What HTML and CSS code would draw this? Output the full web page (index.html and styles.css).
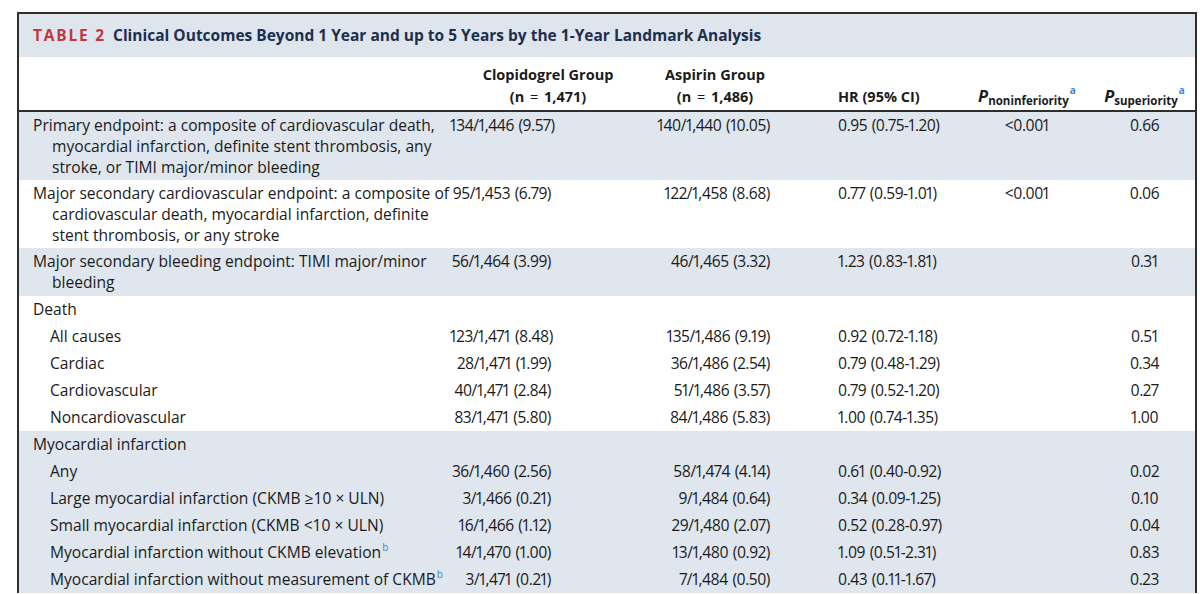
FILE: index.html
```html
<!DOCTYPE html>
<html lang="en">
<head>
<meta charset="utf-8">
<title>Table 2</title>
<link rel="stylesheet" href="styles.css">
</head>
<body>
<div class="frame">
  <div class="caption"><span class="label">TABLE 2</span><span class="title">Clinical Outcomes Beyond 1 Year and up to 5 Years by the 1-Year Landmark Analysis</span></div>
  <table class="outcomes">
    <colgroup>
      <col class="c-label"><col class="c-clop"><col class="c-asp"><col class="c-hr"><col class="c-pn"><col class="c-ps">
    </colgroup>
    <thead>
      <tr>
        <th class="h-label"></th>
        <th class="h-clop">Clopidogrel Group<br>(n <span class="eq">=</span> 1,471)</th>
        <th class="h-asp">Aspirin Group<br>(n <span class="eq">=</span> 1,486)</th>
        <th class="h-hr">HR (95% CI)</th>
        <th class="h-p"><i class="p">P</i><sub>noninferiority</sub><sup class="fn">a</sup></th>
        <th class="h-p"><i class="p">P</i><sub>superiority</sub><sup class="fn">a</sup></th>
      </tr>
    </thead>
    <tbody class="band">
      <tr class="multi">
        <td class="lbl">Primary endpoint: a composite of cardiovascular death, myocardial infarction, definite stent thrombosis, any stroke, or TIMI major/minor bleeding</td>
        <td class="clop">134/1,446 (9.57)</td><td class="asp">140/1,440 (10.05)</td><td class="hr">0.95 (0.75-1.20)</td><td class="pn">&lt;0.001</td><td class="ps">0.66</td>
      </tr>
    </tbody>
    <tbody>
      <tr class="multi">
        <td class="lbl">Major secondary cardiovascular endpoint: a composite of cardiovascular death, myocardial infarction, definite stent thrombosis, or any stroke</td>
        <td class="clop">95/1,453 (6.79)</td><td class="asp">122/1,458 (8.68)</td><td class="hr">0.77 (0.59-1.01)</td><td class="pn">&lt;0.001</td><td class="ps">0.06</td>
      </tr>
    </tbody>
    <tbody class="band">
      <tr class="multi last">
        <td class="lbl">Major secondary bleeding endpoint: TIMI major/minor bleeding</td>
        <td class="clop">56/1,464 (3.99)</td><td class="asp">46/1,465 (3.32)</td><td class="hr">1.23 (0.83-1.81)</td><td class="pn"></td><td class="ps">0.31</td>
      </tr>
    </tbody>
    <tbody>
      <tr><td class="lbl" colspan="6">Death</td></tr>
      <tr><td class="sub">All causes</td><td class="clop">123/1,471 (8.48)</td><td class="asp">135/1,486 (9.19)</td><td class="hr">0.92 (0.72-1.18)</td><td class="pn"></td><td class="ps">0.51</td></tr>
      <tr><td class="sub">Cardiac</td><td class="clop">28/1,471 (1.99)</td><td class="asp">36/1,486 (2.54)</td><td class="hr">0.79 (0.48-1.29)</td><td class="pn"></td><td class="ps">0.34</td></tr>
      <tr><td class="sub">Cardiovascular</td><td class="clop">40/1,471 (2.84)</td><td class="asp">51/1,486 (3.57)</td><td class="hr">0.79 (0.52-1.20)</td><td class="pn"></td><td class="ps">0.27</td></tr>
      <tr><td class="sub">Noncardiovascular</td><td class="clop">83/1,471 (5.80)</td><td class="asp">84/1,486 (5.83)</td><td class="hr">1.00 (0.74-1.35)</td><td class="pn"></td><td class="ps">1.00</td></tr>
    </tbody>
    <tbody class="band">
      <tr><td class="lbl" colspan="6">Myocardial infarction</td></tr>
      <tr><td class="sub">Any</td><td class="clop">36/1,460 (2.56)</td><td class="asp">58/1,474 (4.14)</td><td class="hr">0.61 (0.40-0.92)</td><td class="pn"></td><td class="ps">0.02</td></tr>
      <tr><td class="sub">Large myocardial infarction (CKMB ≥10 × ULN)</td><td class="clop">3/1,466 (0.21)</td><td class="asp">9/1,484 (0.64)</td><td class="hr">0.34 (0.09-1.25)</td><td class="pn"></td><td class="ps">0.10</td></tr>
      <tr><td class="sub">Small myocardial infarction (CKMB &lt;10 × ULN)</td><td class="clop">16/1,466 (1.12)</td><td class="asp">29/1,480 (2.07)</td><td class="hr">0.52 (0.28-0.97)</td><td class="pn"></td><td class="ps">0.04</td></tr>
      <tr><td class="sub">Myocardial infarction without CKMB elevation<sup class="fn">b</sup></td><td class="clop">14/1,470 (1.00)</td><td class="asp">13/1,480 (0.92)</td><td class="hr">1.09 (0.51-2.31)</td><td class="pn"></td><td class="ps">0.83</td></tr>
      <tr><td class="sub">Myocardial infarction without measurement of CKMB<sup class="fn">b</sup></td><td class="clop">3/1,471 (0.21)</td><td class="asp">7/1,484 (0.50)</td><td class="hr">0.43 (0.11-1.67)</td><td class="pn"></td><td class="ps">0.23</td></tr>
    </tbody>
  </table>
</div>
</body>
</html>
```

FILE: styles.css
```css
html, body {
  margin: 0;
  padding: 0;
  background: #ffffff;
}

body {
  font-family: "Open Sans", "Noto Sans", "Liberation Sans", sans-serif;
  color: #1b1b1b;
  overflow: hidden;
}

.frame {
  margin: 12px 0 0 17px;
  width: 1180px;
  box-sizing: border-box;
  border: 2px solid #2e2e2e;
  border-bottom: none;
}

.caption {
  background: #dee5ed;
  padding: 11px 0 11px 14px;
  font-size: 15.5px;
  line-height: 21px;
  font-weight: 700;
  white-space: nowrap;
}

.caption .label {
  color: #c2363d;
  letter-spacing: 1.8px;
  margin-right: 7px;
}

.caption .title {
  color: #1d2f4d;
}

.outcomes {
  width: 1176px;
  border-collapse: collapse;
  border-spacing: 0;
  table-layout: fixed;
  font-size: 15.6px;
  line-height: 21px;
}

.c-label { width: 431px; }
.c-clop { width: 170px; }
.c-asp { width: 180px; }
.c-hr { width: 160px; }
.c-pn { width: 134px; }
.c-ps { width: 101px; }

.outcomes th {
  font-weight: 700;
  font-size: 14.5px;
  line-height: 22px;
  vertical-align: bottom;
  padding: 7px 0 2px;
  border-bottom: 2px solid #2e2e2e;
  white-space: nowrap;
}

.eq {
  font-weight: 400;
  margin: 0 2px;
}

.h-clop { text-align: center; padding-left: 30px !important; padding-right: 4px !important; }
.h-asp { text-align: center; padding-left: 10px !important; }
.h-hr { text-align: left; padding-left: 38px !important; }
.h-p { text-align: center; }

.h-p .p {
  font-size: 16.5px;
  font-style: italic;
}

.h-p sub {
  font-size: 11.5px;
  vertical-align: -3px;
  line-height: 0;
}

.fn {
  color: #3f88c5;
  font-size: 10px;
  vertical-align: 7px;
  line-height: 0;
  font-weight: 400;
  margin-left: 1px;
  letter-spacing: 0;
}

.h-p .fn {
  font-weight: 700;
  vertical-align: 8px;
}

.outcomes td {
  padding: 3px 0;
  vertical-align: top;
  white-space: nowrap;
}

.outcomes tr.multi td {
  padding-bottom: 2px;
}

.outcomes tr.multi.last td {
  padding-bottom: 3px;
}

.band {
  background: #dfe6ee;
}

.outcomes td.lbl {
  padding-left: 33px;
  padding-right: 0;
  text-indent: -19px;
  white-space: normal;
}

.outcomes td.sub {
  padding-left: 31px;
}

.clop, .asp, .hr, .pn, .ps {
  font-size: 15.6px;
  letter-spacing: -0.45px;
  word-spacing: 1px;
  font-variant-numeric: proportional-nums;
}

.clop { text-align: right; padding-right: 69px !important; }
.asp { text-align: right; padding-right: 30px !important; }
.hr { text-align: left; padding-left: 38px !important; }
.pn { text-align: center; }
.ps { text-align: center; }
```
